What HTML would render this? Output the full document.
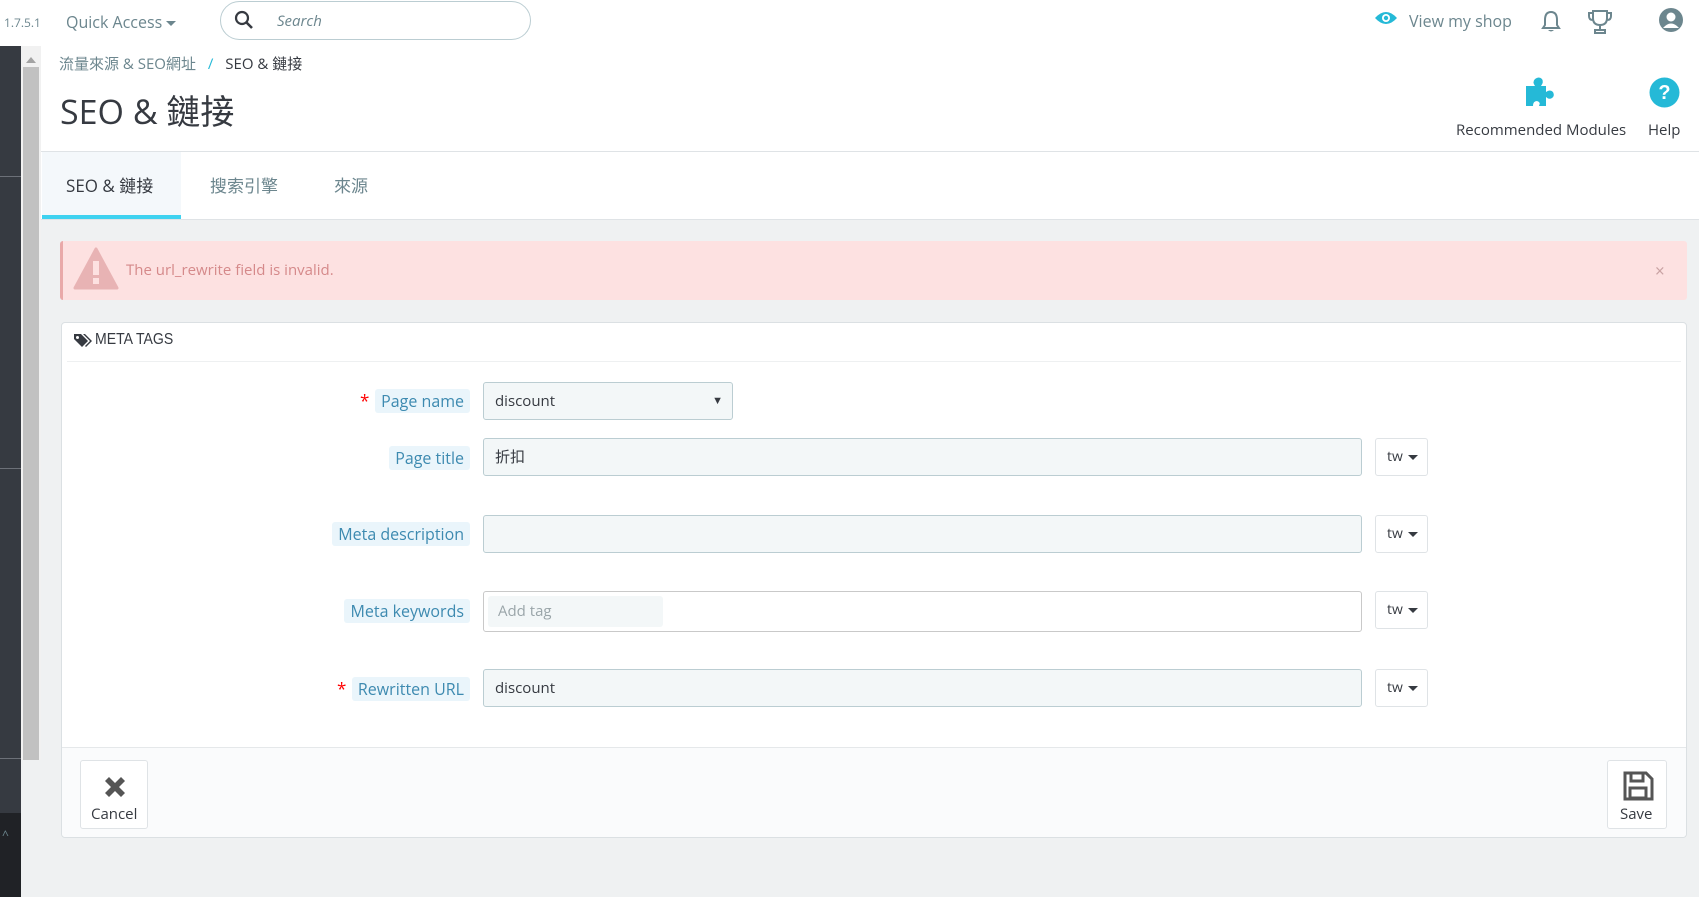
<!DOCTYPE html>
<html><head><meta charset="utf-8"><style>
*{box-sizing:border-box;margin:0;padding:0}
body{width:1699px;height:897px;overflow:hidden;background:#eff1f2;font-family:"Open Sans","Liberation Sans","Noto Sans CJK TC",sans-serif;color:#363a41;position:relative}
.abs{position:absolute}
.top{left:0;top:0;width:1699px;height:46px;background:#fff}
.lbl{position:absolute;right:1229px;height:24px;line-height:24px;padding:0 6px;background:#eaf5fb;color:#3d8ab0;font-size:16px;border-radius:3px}
.req{position:absolute;color:#f00;font-size:17px}
.inp{position:absolute;left:483px;width:879px;height:38px;border:1px solid #bbcdd2;border-radius:3px;background:#f3f7f8;font-size:15px;line-height:36px;padding-left:11px;color:#363a41}
.tw{position:absolute;left:1375px;width:53px;height:38px;border:1px solid #dfe3e6;border-radius:3px;background:#fff;font-size:14px;line-height:36px;padding-left:11px;color:#363a41}
.tw:after{content:"";position:absolute;left:32px;top:16px;border:5px solid transparent;border-top:5px solid #363a41}
</style></head><body>
<div class="abs top"></div>
<div class="abs" style="left:4px;top:14px;font-size:12px;color:#6c868e">1.7.5.1</div>
<div class="abs" style="left:66px;top:11px;font-size:16px;color:#6c868e">Quick Access <span style="display:inline-block;border:5px solid transparent;border-top:5px solid #6c868e;vertical-align:-3px"></span></div>
<div class="abs" style="left:220px;top:1px;width:311px;height:39px;border:1px solid #bbcdd2;border-radius:20px"></div>
<svg class="abs" style="left:234px;top:10px" width="20" height="20" viewBox="0 0 20 20"><circle cx="8" cy="8" r="6" fill="none" stroke="#363a41" stroke-width="2.2"/><path d="M12.5 12.5L18 18" stroke="#363a41" stroke-width="2.6"/></svg>
<div class="abs" style="left:277px;top:11px;font-size:15px;font-style:italic;color:#6c868e">Search</div>
<svg class="abs" style="left:1374px;top:10px" width="24" height="16" viewBox="0 0 24 16"><path d="M1 8Q12-4 23 8Q12 20 1 8Z" fill="#25b9d7"/><circle cx="12" cy="8" r="4" fill="#fff"/><circle cx="12" cy="8" r="2.2" fill="#25b9d7"/></svg>
<div class="abs" style="left:1409px;top:10px;font-size:16px;color:#6c868e">View my shop</div>
<svg class="abs" style="left:1540px;top:9px" width="22" height="24" viewBox="0 0 22 24"><path d="M11 3C6 3 5 7 5 11V16L3 19H19L17 16V11C17 7 16 3 11 3Z" fill="none" stroke="#6c868e" stroke-width="2"/><path d="M8 21Q11 24 14 21" fill="#6c868e"/></svg>
<svg class="abs" style="left:1587px;top:9px" width="26" height="26" viewBox="0 0 26 26"><path d="M6 2H20V9Q20 16 13 16Q6 16 6 9Z M6 4H2V7Q2 11 6 11 M20 4H24V7Q24 11 20 11 M13 16V20 M8 21H18V24H8Z" fill="none" stroke="#6c868e" stroke-width="2"/></svg>
<svg class="abs" style="left:1658px;top:7px" width="26" height="26" viewBox="0 0 26 26"><circle cx="13" cy="13" r="12" fill="#6c868e"/><circle cx="13" cy="10" r="4.5" fill="#fff"/><path d="M5 21Q13 12 21 21" fill="#fff"/></svg>
<!-- sidebar -->
<div class="abs" style="left:0;top:46px;width:21px;height:851px;background:#363a41"></div>
<div class="abs" style="left:0;top:813px;width:21px;height:84px;background:#202226"></div>
<div class="abs" style="left:0;top:176px;width:21px;height:1px;background:#6c7078"></div>
<div class="abs" style="left:0;top:468px;width:21px;height:1px;background:#6c7078"></div>
<div class="abs" style="left:0;top:758px;width:21px;height:1px;background:#6c7078"></div>
<div class="abs" style="left:2px;top:826px;font-size:12px;color:#6c868e">^</div>
<div class="abs" style="left:21px;top:46px;width:20px;height:714px;background:#f1f1f1"></div>
<div class="abs" style="left:23px;top:67px;width:16px;height:693px;background:#c1c1c1"></div>
<div class="abs" style="left:26px;top:52px;border:5px solid transparent;border-bottom:6px solid #a3a3a3"></div>
<!-- header -->
<div class="abs" style="left:41px;top:46px;width:1658px;height:174px;background:#fff"></div>
<div class="abs" style="left:59px;top:53px;font-size:15px;color:#6c868e">流量來源 &amp; SEO網址 <span style="color:#25b9d7;margin:0 8px">/</span> <span style="color:#363a41">SEO &amp; 鏈接</span></div>
<div class="abs" style="left:60px;top:85px;font-size:34px;color:#363a41">SEO &amp; 鏈接</div>
<svg class="abs" style="left:1524px;top:76px" width="36" height="32" viewBox="0 0 36 32"><path d="M2 10H11Q8 6 11 3Q15 0 18 3Q20 6 17 10H22V16Q26 13 29 16Q31 20 28 22Q25 24 22 21V30H15Q17 26 13 25Q9 25 9 30H2Z" fill="#25b9d7"/></svg>
<svg class="abs" style="left:1649px;top:77px" width="31" height="31" viewBox="0 0 31 31"><circle cx="15.5" cy="15.5" r="15" fill="#25b9d7"/><text x="15.5" y="22" text-anchor="middle" font-family="Liberation Sans" font-weight="bold" font-size="20" fill="#fff">?</text></svg>
<div class="abs" style="left:1456px;top:120px;font-size:15px;color:#363a41">Recommended Modules</div>
<div class="abs" style="left:1648px;top:120px;font-size:15px;color:#363a41">Help</div>
<div class="abs" style="left:41px;top:151px;width:1658px;height:1px;background:#dfe3e6"></div>
<div class="abs" style="left:42px;top:152px;width:139px;height:68px;background:#f4f8fb"></div>
<div class="abs" style="left:42px;top:215px;width:139px;height:4px;background:#3ed2f0"></div>
<div class="abs" style="left:41px;top:219px;width:1658px;height:1px;background:#dfe3e6"></div>
<div class="abs" style="left:66px;top:172px;font-size:17px;color:#363a41">SEO &amp; 鏈接</div>
<div class="abs" style="left:210px;top:172px;font-size:17px;color:#6c868e">搜索引擎</div>
<div class="abs" style="left:334px;top:172px;font-size:17px;color:#6c868e">來源</div>
<!-- alert -->
<div class="abs" style="left:60px;top:241px;width:1627px;height:59px;background:#fde1e1;border-left:3px solid #e9a9a9;border-radius:3px"></div>
<svg class="abs" style="left:73px;top:247px" width="46" height="44" viewBox="0 0 46 44"><path d="M23 2L44 41H2Z" fill="#e8b3b4" stroke="#e8b3b4" stroke-width="3" stroke-linejoin="round"/><rect x="20" y="14" width="6" height="14" fill="#fde1e1"/><rect x="20" y="31" width="6" height="6" fill="#fde1e1"/></svg>
<div class="abs" style="left:126px;top:260px;font-size:15px;color:#d5898a">The url_rewrite field is invalid.</div>
<div class="abs" style="left:1655px;top:259px;font-size:17px;color:#c9a2a3">×</div>
<!-- panel -->
<div class="abs" style="left:61px;top:322px;width:1626px;height:516px;background:#fff;border:1px solid #dbe0e3;border-radius:4px"></div>
<div class="abs" style="left:62px;top:747px;width:1624px;height:90px;background:#fafbfc;border-top:1px solid #e5e8ea;border-radius:0 0 4px 4px"></div>
<svg class="abs" style="left:73px;top:333px" width="20" height="16" viewBox="0 0 20 16"><path d="M1 1H8L15 8L9 14L1 6Z" fill="#363a41"/><circle cx="4.5" cy="4.5" r="1.5" fill="#fff"/><path d="M10 1H12L19 8L13 14L12 13L17 8Z" fill="#363a41"/></svg>
<div class="abs" style="left:95px;top:331px;font-size:16px;color:#363a41;font-family:'Liberation Sans Narrow','Liberation Sans',sans-serif;transform:scaleX(0.88);transform-origin:left">META TAGS</div>
<div class="abs" style="left:67px;top:361px;width:1614px;height:1px;background:#eef0f1"></div>

<div class="req" style="left:360px;top:389px">*</div>
<div class="lbl" style="top:389px">Page name</div>
<div class="inp" style="top:382px;width:250px">discount<span style="position:absolute;right:9px;font-size:11px">▼</span></div>

<div class="lbl" style="top:446px">Page title</div>
<div class="inp" style="top:438px">折扣</div>
<div class="tw" style="top:438px">tw</div>

<div class="lbl" style="top:522px">Meta description</div>
<div class="inp" style="top:515px"></div>
<div class="tw" style="top:515px">tw</div>

<div class="lbl" style="top:599px">Meta keywords</div>
<div class="inp" style="top:591px;height:41px;background:#fff;border-color:#c9c9c9"><span style="position:absolute;left:4px;top:4px;width:175px;height:31px;background:#f3f7f8;border-radius:3px;line-height:31px;padding-left:10px;color:#9aa5a9">Add tag</span></div>
<div class="tw" style="top:591px">tw</div>

<div class="req" style="left:337px;top:677px">*</div>
<div class="lbl" style="top:677px">Rewritten URL</div>
<div class="inp" style="top:669px">discount</div>
<div class="tw" style="top:669px">tw</div>

<div class="abs" style="left:80px;top:760px;width:68px;height:69px;background:#fff;border:1px solid #dfe3e6;border-radius:3px"></div>
<svg class="abs" style="left:102px;top:774px" width="26" height="26" viewBox="0 0 26 26"><path d="M3 7L7 3L13 9L19 3L23 7L17 13L23 19L19 23L13 17L7 23L3 19L9 13Z" fill="#555"/></svg>
<div class="abs" style="left:91px;top:804px;font-size:15px;color:#363a41">Cancel</div>
<div class="abs" style="left:1607px;top:760px;width:60px;height:69px;background:#fff;border:1px solid #dfe3e6;border-radius:3px"></div>
<svg class="abs" style="left:1622px;top:770px" width="32" height="32" viewBox="0 0 32 32"><path d="M3 3H24L30 9V29H3Z" fill="none" stroke="#555" stroke-width="3"/><rect x="9" y="3" width="12" height="8" fill="none" stroke="#555" stroke-width="3"/><rect x="8" y="18" width="16" height="10" fill="none" stroke="#555" stroke-width="3"/></svg>
<div class="abs" style="left:1620px;top:804px;font-size:15px;color:#363a41">Save</div>
</body></html>
